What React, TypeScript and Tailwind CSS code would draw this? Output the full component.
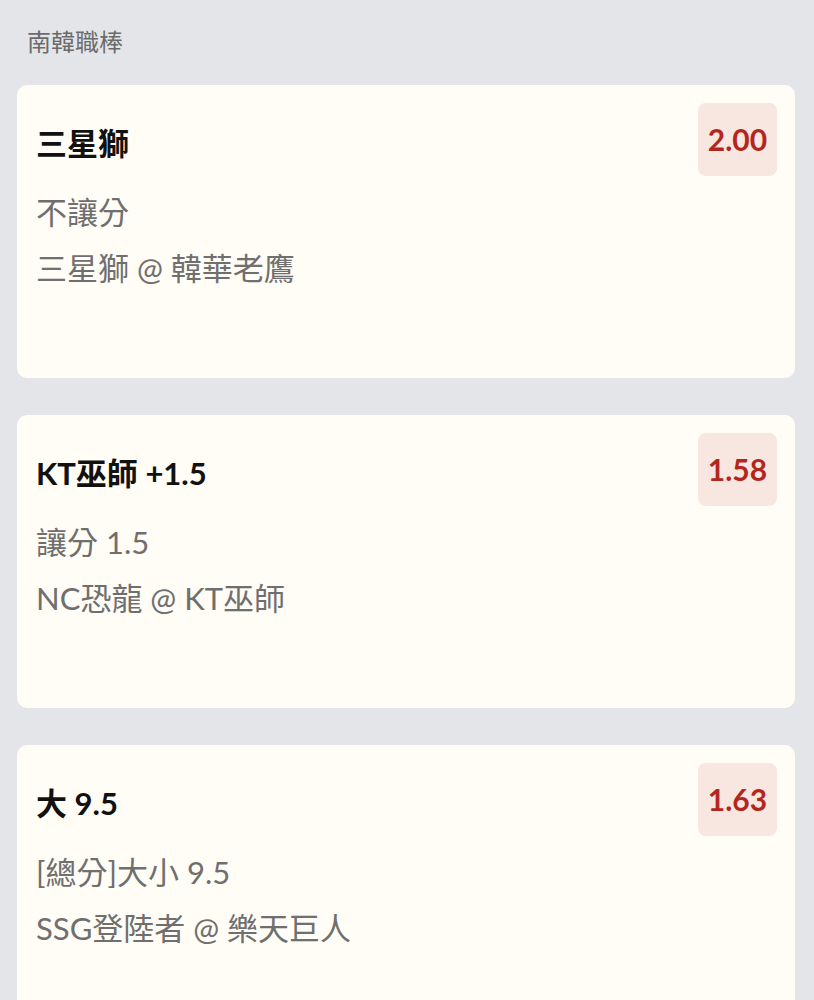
const bets = [
  { title: "三星獅", odds: "2.00", market: "不讓分", match: "三星獅 @ 韓華老鷹" },
  { title: "KT巫師 +1.5", odds: "1.58", market: "讓分 1.5", match: "NC恐龍 @ KT巫師" },
  { title: "大 9.5", odds: "1.63", market: "[總分]大小 9.5", match: "SSG登陸者 @ 樂天巨人" },
];

function BetCard({ title, odds, market, match }: (typeof bets)[number]) {
  return (
    <div className="ml-[17px] mr-[19px] h-[293px] rounded-[10px] bg-[#fffdf5] p-[18px] pl-[19px]">
      <div className="flex items-center justify-between">
        <p className="pt-[8px] text-[31px] leading-[45px] font-bold text-[#111]">{title}</p>
        <div className="flex h-[73px] w-[79px] items-center justify-center rounded-[8px] bg-[#f8e6e0] text-[30px] font-bold text-[#b3261e]">
          {odds}
        </div>
      </div>
      <div className="mt-[8px] text-[31px] leading-[56px] text-[#6f6f6f]">
        <p>{market}</p>
        <p>{match}</p>
      </div>
    </div>
  );
}

export default function App() {
  return (
    <div
      className="min-h-screen bg-[#e4e5e9] pt-[24px]"
      style={{ fontFamily: 'Lato, "Noto Sans CJK TC", sans-serif' }}
    >
      <p className="px-[27px] text-[24px] leading-[36px] text-[#6b6b6b]">南韓職棒</p>
      <div className="mt-[25px] flex flex-col gap-[37px]">
        {bets.map((b) => (
          <BetCard key={b.title} {...b} />
        ))}
      </div>
    </div>
  );
}
